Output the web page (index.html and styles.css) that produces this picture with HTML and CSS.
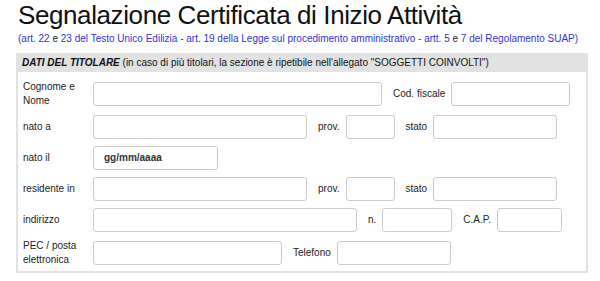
FILE: index.html
```html
<!DOCTYPE html>
<html lang="it">
<head>
  <meta charset="UTF-8" />
  <title>SCIA</title>
  <link rel="stylesheet" href="styles.css">
</head>
<body>
  <div class="page">
    <h1 class="titolo">Segnalazione Certificata di Inizio Attività</h1>
    <p class="rif">(art. 22 <span class="nero">e</span> 23 del Testo Unico Edilizia - art. 19 della Legge sul procedimento amministrativo - artt. 5 <span class="nero">e</span> 7 del Regolamento SUAP)</p>

    <div class="sezione">
      <div class="sezione-head"><b><i>DATI DEL TITOLARE</i></b> (in caso di più titolari, la sezione è ripetibile nell'allegato "SOGGETTI COINVOLTI")</div>
      <div class="sezione-body">
        <div class="riga">
          <label class="etichetta">Cognome e Nome</label>
          <input class="campo w-nome" type="text">
          <span class="lbl">Cod. fiscale</span>
          <input class="campo w-cf" type="text">
        </div>
        <div class="riga">
          <label class="etichetta">nato a</label>
          <input class="campo w-luogo" type="text">
          <span class="lbl">prov.</span>
          <input class="campo w-prov" type="text">
          <span class="lbl">stato</span>
          <input class="campo w-stato" type="text">
        </div>
        <div class="riga">
          <label class="etichetta">nato il</label>
          <input class="campo w-data" type="text" value="gg/mm/aaaa">
        </div>
        <div class="riga">
          <label class="etichetta">residente in</label>
          <input class="campo w-luogo" type="text">
          <span class="lbl">prov.</span>
          <input class="campo w-prov" type="text">
          <span class="lbl">stato</span>
          <input class="campo w-stato" type="text">
        </div>
        <div class="riga">
          <label class="etichetta">indirizzo</label>
          <input class="campo w-via" type="text">
          <span class="lbl">n.</span>
          <input class="campo w-civico" type="text">
          <span class="lbl">C.A.P.</span>
          <input class="campo w-cap" type="text">
        </div>
        <div class="riga">
          <label class="etichetta">PEC / posta elettronica</label>
          <input class="campo w-pec" type="text">
          <span class="lbl">Telefono</span>
          <input class="campo w-tel" type="text">
        </div>
      </div>
    </div>
  </div>
</body>
</html>
```

FILE: styles.css
```css
body {
  margin: 0;
  font-family: Arial, "Liberation Sans", sans-serif;
  background-color: #fff;
  color: #222;
}
.page {
  padding: 0 12px 0 16px;
}
.titolo {
  margin: 0 0 0 2px;
  font-size: 26px;
  letter-spacing: -0.4px;
  font-weight: normal;
  line-height: 30px;
  color: #111;
}
.rif {
  margin: 2px 0 0 2px;
  font-size: 10px;
  line-height: 14px;
  color: #3333cc;
}
.nero {
  color: #222;
}
.sezione {
  margin-top: 7px;
  width: 568px;
  border: 2px solid #e2e2e2;
  border-top: none;
}
.sezione-head {
  background-color: #e2e2e2;
  height: 19px;
  line-height: 19px;
  padding-left: 4px;
  font-size: 10px;
  color: #111;
}
.sezione-body {
  padding: 4px 0 1px 5px;
}
.riga {
  display: flex;
  align-items: center;
  padding: 3.5px 0;
  font-size: 10px;
}
.etichetta {
  width: 70px;
  line-height: 14px;
  flex-shrink: 0;
}
.lbl {
  margin: 0 6px 0 11px;
}
.campo {
  box-sizing: border-box;
  height: 24px;
  margin: 0;
  border: 1px solid #ccc;
  border-radius: 3px;
  padding: 0 10px;
  font-family: Arial, "Liberation Sans", sans-serif;
  font-size: 10px;
  font-weight: bold;
  color: #333;
  background: #fff;
}
.w-nome { width: 289px; }
.w-cf { width: 119px; }
.w-luogo { width: 214px; }
.w-prov { width: 49px; }
.w-stato { width: 124px; }
.w-data { width: 125px; }
.w-via { width: 264px; }
.w-civico { width: 70px; }
.w-cap { width: 65px; }
.w-pec { width: 189px; }
.w-tel { width: 114px; }
```
